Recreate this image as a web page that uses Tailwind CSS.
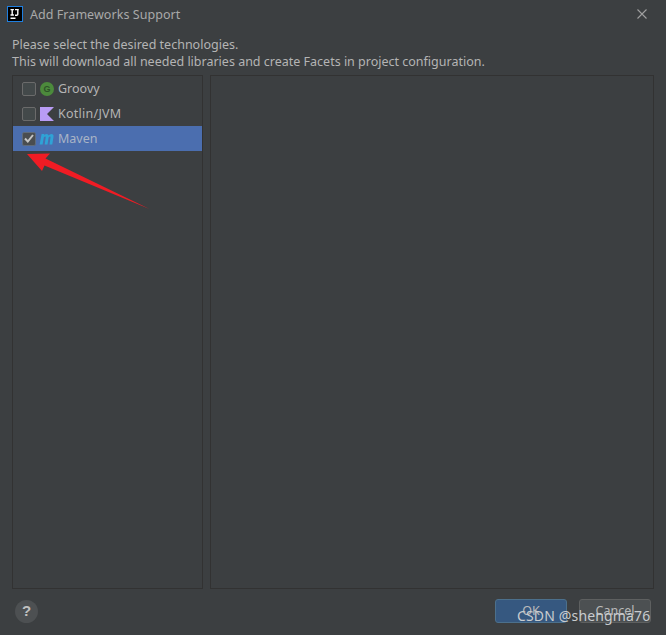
<!DOCTYPE html>
<html>
<head>
<meta charset="utf-8">
<script src="https://cdn.jsdelivr.net/npm/@tailwindcss/browser@4"></script>
</head>
<body class="m-0 bg-[#3c3f41]">
<div class="relative w-[666px] h-[635px] overflow-hidden bg-[#3c3f41] flex flex-col font-['Noto_Sans','Open_Sans',sans-serif] text-[12.5px] text-[#bbbbbb]">
  <header class="h-[30px] flex items-center pl-[7px] pr-[19px] shrink-0">
    <svg width="16" height="16" viewBox="0 0 16 16" class="shrink-0 mb-[2px]">
      <rect x="0.5" y="0.5" width="15" height="15" fill="#000" stroke="#1f7fe0"/>
      <path d="M3.5 3.6h3.4M5.2 3.6v5.4M3.5 9h3.4M8 3.6h3.8M10.8 3.6v4.6q0 1-1 1H8M3.5 12.2h5" stroke="#fff" stroke-width="1.4" fill="none"/>
    </svg>
    <span class="ml-[7px] text-[#a9a9a9] text-[12.5px] tracking-[0.05px]">Add Frameworks Support</span>
    <svg width="10" height="10" viewBox="0 0 10 10" class="ml-auto mb-[2px]">
      <path d="M0.5 0.5L9.5 9.5M9.5 0.5L0.5 9.5" stroke="#a0a0a0" stroke-width="1.1"/>
    </svg>
  </header>
  <div class="pl-[12px] pt-[6px] leading-[17px] text-[12.5px] text-[#b4b4b4] h-[45px] shrink-0">
    <p>Please select the desired technologies.</p>
    <p>This will download all needed libraries and create Facets in project configuration.</p>
  </div>
  <main class="flex gap-[7px] pl-[12px] pr-[12px] h-[514px] shrink-0">
    <section class="w-[191px] border border-[#323232] flex flex-col">
      <div class="h-[25px] flex items-center pl-[9px]">
        <span class="w-[14px] h-[14px] rounded-[2px] border border-[#6b6b6b] bg-[#43494a]"></span>
        <svg width="14" height="14" viewBox="0 0 14 14" class="ml-[4px]">
          <circle cx="7" cy="7" r="7" fill="#4c8a3c"/>
          <text x="7" y="10.2" text-anchor="middle" font-size="9" font-weight="700" fill="#2c5228" font-family="Liberation Sans">G</text>
        </svg>
        <span class="ml-[4px] pt-[1px] text-[#b4b4b4]">Groovy</span>
      </div>
      <div class="h-[25px] flex items-center pl-[9px]">
        <span class="w-[14px] h-[14px] rounded-[2px] border border-[#6b6b6b] bg-[#43494a]"></span>
        <svg width="14" height="14" viewBox="0 0 14 14" class="ml-[4px]">
          <path d="M0 0H14L7 7L14 14H0Z" fill="#b99cf5"/>
        </svg>
        <span class="ml-[4px] pt-[1px] text-[#b4b4b4] tracking-[0.25px]">Kotlin/JVM</span>
      </div>
      <div class="h-[25px] flex items-center pl-[9px] bg-[#4b6eaf]">
        <span class="w-[14px] h-[14px] rounded-[2px] border border-[#5f6b7c] bg-[#4a4d50] flex items-center justify-center">
          <svg width="10" height="9" viewBox="0 0 10 9"><path d="M1 4.5L3.8 7.5L9 1" stroke="#c4c4c4" stroke-width="2" fill="none"/></svg>
        </span>
        <svg width="15" height="12" viewBox="0 0 15 11" class="ml-[3px]">
          <path d="M.6 11L2.6 .6H5.4L5.2 1.8Q6.4 .4 7.8 .4Q9.3 .4 9.6 1.9Q10.9 .4 12.3 .4Q14.9 .4 14.5 3.2L13.3 11H10.5L11.5 4Q11.6 3.1 11 3.1Q10.2 3.1 9.6 3.9L8.5 11H5.7L6.7 4Q6.8 3.1 6.2 3.1Q5.4 3.1 4.8 3.9L3.6 11Z" fill="#2fa3d6"/>
        </svg>
        <span class="ml-[4px] pt-[1px] text-[#a9b4c6]">Maven</span>
      </div>
    </section>
    <section class="w-[444px] border border-[#323232]"></section>
  </main>
  <footer class="flex items-center pl-[15px] pr-[15px] pt-[10px]">
    <span class="w-[23px] h-[23px] rounded-full bg-[#4d5052] text-[#c0c0c0] flex items-center justify-center text-[15px] font-bold font-['Liberation_Sans',sans-serif]">?</span>
    <div class="ml-auto flex gap-[12px]">
      <button class="w-[72px] h-[24px] rounded-[3px] bg-[#365880] border border-[#4c708c] text-[#bbbbbb] text-[12.5px] leading-[18px]">OK</button>
      <button class="w-[72px] h-[24px] rounded-[3px] bg-[#4c5052] border border-[#5e6060] text-[#bbbbbb] text-[12.5px] leading-[18px]">Cancel</button>
    </div>
  </footer>
  <span class="absolute left-[517px] top-[606px] text-[14px] leading-[20px] text-[#c9cccf] tracking-[0.15px] whitespace-nowrap">CSDN @shengma76</span>
  <svg class="absolute left-0 top-0 pointer-events-none" width="666" height="635" viewBox="0 0 666 635">
    <path d="M27 154L50 153.5L45.5 158.5L149.5 209L44.5 165.5L42 171Z" fill="#f01c24"/>
  </svg>
</div>
</body>
</html>
